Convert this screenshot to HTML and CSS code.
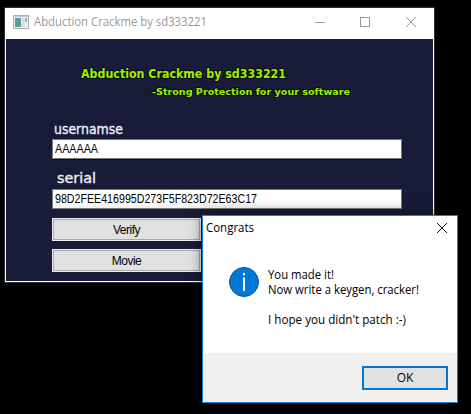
FILE: index.html
```html
<!DOCTYPE html>
<html lang="en">
<head>
<meta charset="utf-8">
<title>Abduction Crackme by sd333221</title>
<link rel="stylesheet" href="styles.css">
</head>
<body>
<main class="desktop">
  <section class="window">
    <header class="titlebar">
      <svg class="app-icon" width="16" height="14" viewBox="0 0 16 14">
        <defs><linearGradient id="pane" x2="0" y2="1"><stop stop-color="#6b8fc0"/><stop offset="1" stop-color="#55a878"/></linearGradient></defs>
        <rect x=".5" y=".5" width="15" height="13" fill="#eef0f0" stroke="#a9b0b2"/>
        <path d="M1 1.5h14" stroke="#c5cbcd"/>
        <rect x="2" y="3" width="6" height="9" fill="url(#pane)"/>
        <rect x="9" y="3" width="2.5" height="9" fill="#d8dcdd"/>
        <rect x="12" y="3" width="2" height="4" fill="#8abf9d"/>
      </svg>
      <svg class="title" width="180" height="20"><text x="0" y="14" textLength="173" lengthAdjust="spacingAndGlyphs">Abduction Crackme by sd333221</text></svg>
      <svg class="controls" width="102" height="12" viewBox="0 0 102 12" shape-rendering="crispEdges">
        <path d="M0 6.5h10M45.500 1.500h9v9h-9z"/>
        <path d="M91 1l10 10M101 1L91 11" shape-rendering="auto"/>
      </svg>
    </header>
    <div class="client">
      <svg class="banner" width="290" height="34">
        <text class="banner-title" x="1" y="13" textLength="205" lengthAdjust="spacingAndGlyphs">Abduction Crackme by sd333221</text>
        <text class="banner-sub" x="72" y="30" textLength="198" lengthAdjust="spacingAndGlyphs">-Strong Protection for your software</text>
      </svg>
      <svg class="label" width="90" height="16"><text x="2" y="13" textLength="69" lengthAdjust="spacingAndGlyphs">usernamse</text></svg>
      <div class="field name"><svg width="340" height="18"><text x="2" y="13" textLength="43" lengthAdjust="spacingAndGlyphs">AAAAAA</text></svg></div>
      <svg class="label serial-label" width="90" height="16"><text x="5" y="11" textLength="39" lengthAdjust="spacingAndGlyphs">serial</text></svg>
      <div class="field serial"><svg width="340" height="18"><text x="2" y="13" textLength="202" lengthAdjust="spacingAndGlyphs">98D2FEE416995D273F5F823D72E63C17</text></svg></div>
      <button class="action">Verify</button>
      <button class="action">Movie</button>
    </div>
  </section>

  <section class="dialog">
    <header class="dialog-title">
      <svg width="60" height="22"><text x="0" y="15" textLength="48" lengthAdjust="spacingAndGlyphs">Congrats</text></svg>
      <svg class="close" width="12" height="12" viewBox="0 0 12 12"><path d="M1 1l10 10M11 1L1 11"/></svg>
    </header>
    <div class="message">
      <svg class="info" width="30" height="30" viewBox="0 0 30 30">
        <circle cx="15" cy="15" r="14.500" fill="#0078d7" stroke="#075596"/>
        <path d="M15 10.500V24M15 6v2.300" stroke="#fff" stroke-width="2"/>
      </svg>
      <svg class="message-text" width="170" height="64">
        <text x="0" y="14" textLength="66" lengthAdjust="spacingAndGlyphs">You made it!</text>
        <text x="0" y="29" textLength="151" lengthAdjust="spacingAndGlyphs">Now write a keygen, cracker!</text>
        <text x="0" y="59" textLength="138" lengthAdjust="spacingAndGlyphs">I hope you didn't patch :-)</text>
      </svg>
    </div>
    <footer class="dialog-footer"><button class="ok">OK</button></footer>
  </section>
</main>
</body>
</html>
```
FILE: styles.css
```css
* { box-sizing: border-box; }
body { margin: 0; background: #000; overflow: hidden; font: 12px "Open Sans", "Noto Sans", sans-serif; }
svg { display: block; flex: none; overflow: visible; }
button { display: block; padding: 0; border-radius: 0; color: #000; }
.desktop { position: relative; width: 471px; height: 414px; background: #000; overflow: hidden; }

.window { position: absolute; left: 4px; top: 7px; width: 431px; height: 276px; border: 1px solid #303030; background: #fff; }
.titlebar { display: flex; align-items: center; height: 31px; padding: 0 17px 4px 8px; }
.title { margin-left: 5px; fill: #999; }
.controls { margin-left: auto; fill: none; stroke: #999; }
.client { height: 242px; margin: 0 1px; padding: 26px 0 0 46px; background: #181c38; }
.banner { margin-left: 28px; font-family: "DejaVu Sans", sans-serif; font-weight: bold; fill: #a0ee00; stroke: #080e12; stroke-width: 2px; paint-order: stroke; }
.banner-title { font-size: 11.500px; }
.banner-sub { font-size: 9.500px; }
.label { margin-top: 22px; font: 14px "DejaVu Sans", sans-serif; fill: #f4f4fa; stroke: #f4f4fa; stroke-width: .3px; }
.field { width: 350px; height: 20px; border: 1px solid #7a7a7a; background: #fff; font: 12px "Liberation Sans", sans-serif; }
.name { margin-top: 2px; box-shadow: 0 1px 0 #090b18; }
.serial-label { margin-top: 13px; }
.serial { margin-top: 1px; background: linear-gradient(#fff 55%, #f1f1f1); }
.action { width: 149px; height: 23px; margin-top: 9px; border: 1px solid #f0f0f0; box-shadow: inset 0 0 0 1px #a8a8a8; background: #e1e1e1; font: 12px "Liberation Sans", sans-serif; letter-spacing: -.5px; }
.action + .action { margin-top: 8px; }

.dialog { position: absolute; left: 202px; top: 215px; width: 256px; height: 188px; border: 1px solid #1883d7; background: #fff; box-shadow: 0 0 12px rgba(0, 0, 0, .5); }
.dialog-title { display: flex; height: 25px; padding: 1px 9px 0 3px; }
.close { margin: 5px 0 0 auto; stroke: #111; }
.message { display: flex; height: 112px; padding-left: 26px; }
.info { margin-top: 26px; }
.message-text { margin: 24px 0 0 9px; }
.dialog-footer { height: 49px; padding: 13px 9px 0 0; background: #f0f0f0; }
.ok { width: 86px; height: 24px; margin-left: auto; padding-bottom: 1px; border: 2px solid #0078d7; background: #e1e1e1; font: 12px "Open Sans", sans-serif; }
```
